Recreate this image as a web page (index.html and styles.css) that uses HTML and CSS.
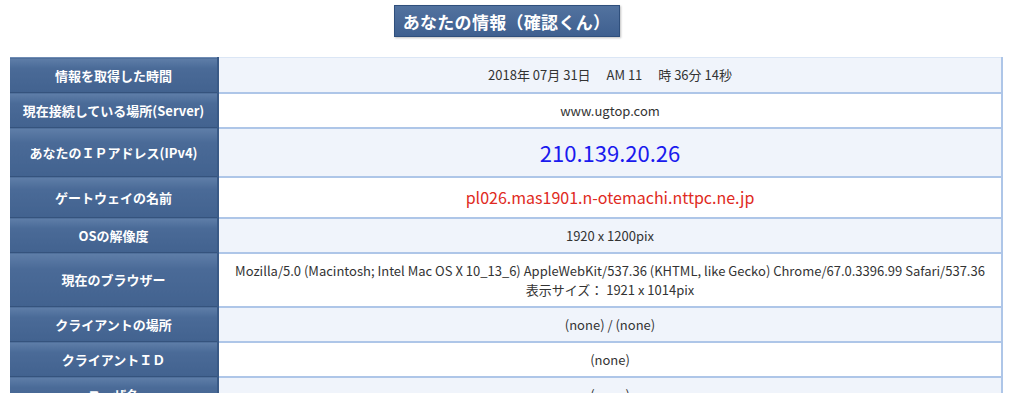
FILE: index.html
```html
<!DOCTYPE html>
<html lang="ja">
<head>
<meta charset="utf-8">
<link rel="stylesheet" href="styles.css">
</head>
<body>
<div class="page">
  <div class="title-wrap"><h1 class="title">あなたの情報（確認くん）</h1></div>
  <table class="info">
    <tr class="r35 odd"><th>情報を取得した時間</th><td>2018年 07月 31日&emsp; AM 11&emsp; 時 36分 14秒</td></tr>
    <tr class="r35 even"><th>現在接続している場所(Server)</th><td>www.ugtop.com</td></tr>
    <tr class="r49 odd"><th>あなたのＩＰアドレス(IPv4)</th><td class="ip">210.139.20.26</td></tr>
    <tr class="r41 even"><th>ゲートウェイの名前</th><td class="gw">pl026.mas1901.n-otemachi.nttpc.ne.jp</td></tr>
    <tr class="r35 odd"><th>OSの解像度</th><td>1920 x 1200pix</td></tr>
    <tr class="r54 even"><th>現在のブラウザー</th><td>Mozilla/5.0 (Macintosh; Intel Mac OS X 10_13_6) AppleWebKit/537.36 (KHTML, like Gecko) Chrome/67.0.3396.99 Safari/537.36<br>表示サイズ： 1921 x 1014pix</td></tr>
    <tr class="r35 odd"><th>クライアントの場所</th><td>(none) / (none)</td></tr>
    <tr class="r35 even"><th>クライアントＩＤ</th><td>(none)</td></tr>
    <tr class="r35 odd"><th>ユーザ名</th><td>(none)</td></tr>
  </table>
</div>
</body>
</html>
```
FILE: styles.css
```css
html, body {
  margin: 0;
  padding: 0;
  background: #ffffff;
}
body {
  font-family: "Noto Sans CJK JP", "Noto Sans", sans-serif;
  color: #333;
}
.page {
  width: 993px;
  margin-left: 10px;
  padding-top: 5px;
}
.title-wrap {
  display: flex;
  justify-content: center;
}
.title {
  margin: 0;
  width: 226px;
  height: 32px;
  box-sizing: border-box;
  display: flex;
  align-items: center;
  justify-content: center;
  font-size: 17px;
  font-weight: bold;
  color: #fff;
  background: linear-gradient(#52729f, #3f6090);
  border: 1px solid #2f4f7c;
  box-shadow: 1px 1px 2px rgba(0,0,0,0.25);
  letter-spacing: 0.3px;
}
.info {
  margin-top: 20px;
  width: 993px;
  border-collapse: collapse;
  table-layout: fixed;
}
.info th {
  width: 207px;
  padding: 0;
  color: #fff;
  font-size: 13px;
  font-weight: bold;
  background: linear-gradient(#5f7ea8 0%, #4a6a97 30%, #42628f 100%);
  border-top: 1px solid #6f8cb4;
  border-bottom: 1px solid #35537d;
  border-right: 2px solid #3a5a86;
  text-align: center;
  vertical-align: middle;
}
.info td {
  padding: 0 8px;
  font-size: 13px;
  color: #333;
  text-align: center;
  vertical-align: middle;
  border-bottom: 2px solid #aec6e8;
  border-right: 2px solid #aec6e8;
  line-height: 19px;
}
.info tr:first-child td { border-top: 1px solid #dbe6f5; }
.odd td { background: #f0f4fb; }
.even td { background: #ffffff; }
.r35 { height: 35px; }
.r41 { height: 41px; }
.r49 { height: 49px; }
.r54 { height: 54px; }
.info td.ip {
  font-size: 22px;
  color: #1a1aee;
}
.info td.gw {
  font-size: 16px;
  color: #e02a22;
}
```
